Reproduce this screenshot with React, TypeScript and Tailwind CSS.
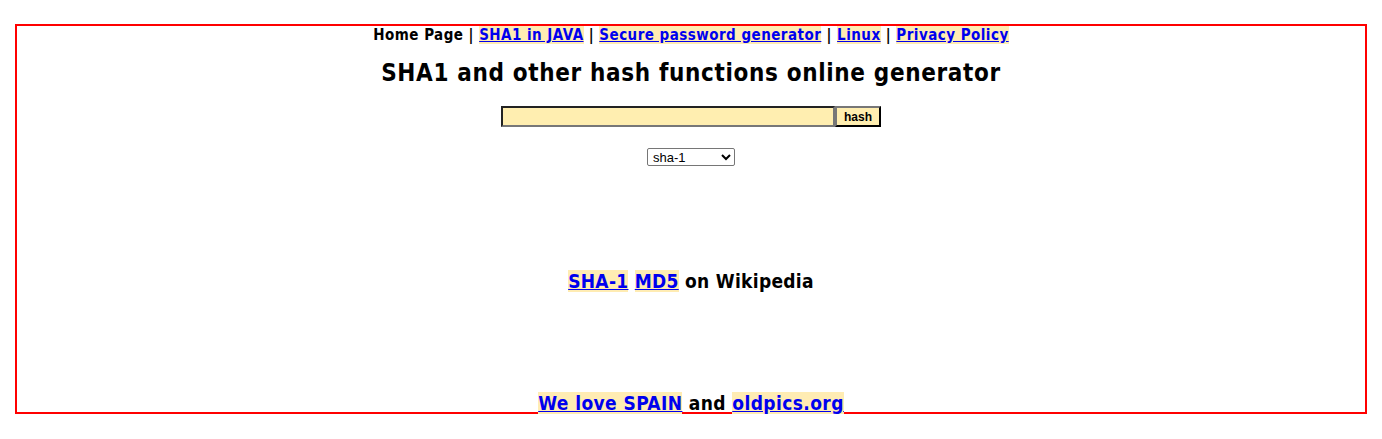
export default function App() {
  const font = "font-['DejaVu_Sans_Condensed','DejaVu_Sans',sans-serif]";
  const link = "text-[#0000ee] underline bg-[#ffecb3]";
  return (
    <div className="bg-white h-[439px] pt-6">
      <div className={`mx-[15px] h-[390px] border-2 border-[#ff0000] text-center font-bold text-black ${font}`}>
        <div className="text-[15px] leading-[17px] mt-[1px] tracking-[0.47px]">
          Home Page | <a className={link}>SHA1 in JAVA</a> |{" "}
          <a className={link}>Secure password generator</a> | <a className={link}>Linux</a> |{" "}
          <a className={link}>Privacy Policy</a>
        </div>
        <h1 className="text-[24px] leading-[28px] mt-[15px] tracking-[0.65px]">
          SHA1 and other hash functions online generator
        </h1>
        <div className="flex justify-center mt-[19px]">
          <input className="w-[334px] h-[21px] bg-[#ffeeb0] border-2 border-t-[#222] border-l-[#222] border-b-[#777] border-r-[#777]" />
          <button className="w-[46px] h-[21px] bg-[#ffeeb0] border-2 border-t-[#777] border-l-[#777] border-b-black border-r-black font-['Liberation_Sans',sans-serif] text-[12px] font-bold">
            hash
          </button>
        </div>
        <div className="flex justify-center mt-[21px]">
          <select className="w-[88px] h-[18px] border border-[#767676] rounded-[2px] bg-white font-['Liberation_Sans',sans-serif] font-normal text-[13px] pl-[1px]">
            <option>sha-1</option>
          </select>
        </div>
        <div className="text-[19px] leading-[22px] mt-[104px] tracking-[0.3px]">
          <a className={link}>SHA-1</a> <a className={link}>MD5</a> on Wikipedia
        </div>
        <div className="text-[19px] leading-[22px] mt-[100px] tracking-[0.4px]">
          <a className={link}>We love SPAIN</a> and <a className={link}>oldpics.org</a>
        </div>
      </div>
    </div>
  );
}
